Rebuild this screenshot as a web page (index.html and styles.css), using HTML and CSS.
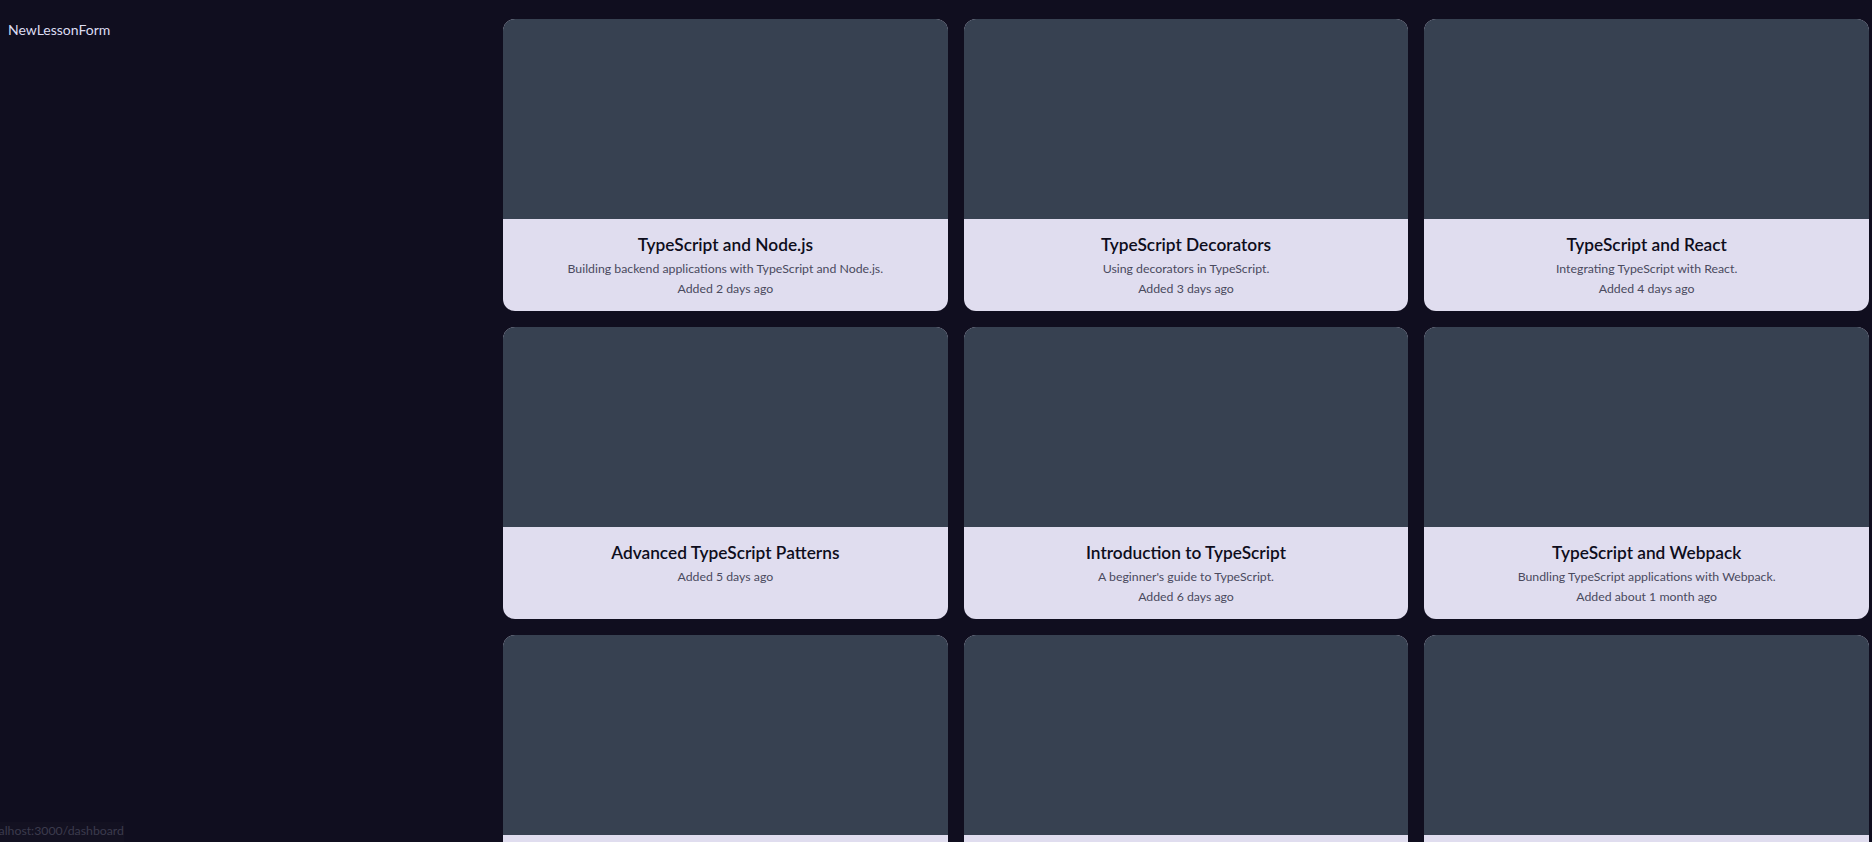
FILE: index.html
```html
<!DOCTYPE html>
<html lang="en">
<head>
<meta charset="utf-8">
<title>Dashboard</title>
<link rel="stylesheet" href="styles.css">
</head>
<body>
<div class="layout">
  <aside class="sidebar">
    <div class="sidebar-title">NewLessonForm</div>
  </aside>
  <main class="main">
    <div class="grid">
      <div class="card">
        <div class="thumb"></div>
        <div class="body">
          <div class="title">TypeScript and Node.js</div>
          <div class="desc">Building backend applications with TypeScript and Node.js.</div>
          <div class="date">Added 2 days ago</div>
        </div>
      </div>
      <div class="card">
        <div class="thumb"></div>
        <div class="body">
          <div class="title">TypeScript Decorators</div>
          <div class="desc">Using decorators in TypeScript.</div>
          <div class="date">Added 3 days ago</div>
        </div>
      </div>
      <div class="card">
        <div class="thumb"></div>
        <div class="body">
          <div class="title">TypeScript and React</div>
          <div class="desc">Integrating TypeScript with React.</div>
          <div class="date">Added 4 days ago</div>
        </div>
      </div>
      <div class="card">
        <div class="thumb"></div>
        <div class="body">
          <div class="title">Advanced TypeScript Patterns</div>
          <div class="date">Added 5 days ago</div>
        </div>
      </div>
      <div class="card">
        <div class="thumb"></div>
        <div class="body">
          <div class="title">Introduction to TypeScript</div>
          <div class="desc">A beginner's guide to TypeScript.</div>
          <div class="date">Added 6 days ago</div>
        </div>
      </div>
      <div class="card">
        <div class="thumb"></div>
        <div class="body">
          <div class="title">TypeScript and Webpack</div>
          <div class="desc">Bundling TypeScript applications with Webpack.</div>
          <div class="date">Added about 1 month ago</div>
        </div>
      </div>
      <div class="card">
        <div class="thumb"></div>
        <div class="body">
          <div class="title">TypeScript Generics</div>
          <div class="desc">Understanding generics in TypeScript.</div>
          <div class="date">Added about 1 month ago</div>
        </div>
      </div>
      <div class="card">
        <div class="thumb"></div>
        <div class="body">
          <div class="title">TypeScript with Express</div>
          <div class="desc">Building APIs with TypeScript and Express.</div>
          <div class="date">Added about 1 month ago</div>
        </div>
      </div>
      <div class="card">
        <div class="thumb"></div>
        <div class="body">
          <div class="title">TypeScript Utility Types</div>
          <div class="desc">Exploring built-in utility types.</div>
          <div class="date">Added about 2 months ago</div>
        </div>
      </div>
    </div>
  </main>
</div>
<div class="status">localhost:3000/dashboard</div>
</body>
</html>
```

FILE: styles.css
```css
html, body {
  margin: 0;
  padding: 0;
  background: #100e1f;
  height: 100%;
  overflow: hidden;
}
body {
  font-family: Lato, "Noto Sans", sans-serif;
  color: #e0ddef;
}
.layout {
  display: flex;
  align-items: flex-start;
}
.sidebar {
  width: 487px;
  flex-shrink: 0;
  padding: 18px 8px;
  box-sizing: border-box;
}
.sidebar-title {
  font-size: 14px;
  line-height: 24px;
  color: #dcdcf2;
}
.main {
  flex: 1;
  padding: 19px 3px 0 16px;
}
.grid {
  display: grid;
  grid-template-columns: repeat(3, 1fr);
  gap: 16px;
}
.card {
  border-radius: 12px;
  overflow: hidden;
  background: #e0ddef;
  display: flex;
  flex-direction: column;
}
.thumb {
  height: 200px;
  background: #374151;
}
.body {
  padding: 12px;
  text-align: center;
  flex: 1;
}
.title {
  font-size: 17.3px;
  line-height: 28px;
  font-weight: 600;
  color: #0e0d1c;
}
.desc, .date {
  font-size: 12.3px;
  line-height: 20px;
  color: #4a4a5e;
}
.status {
  position: fixed;
  left: 0;
  bottom: 0;
  width: 124px;
  height: 20px;
  overflow: hidden;
  background: #131121;
  color: #3c3b4d;
  font-size: 12.3px;
  line-height: 18px;
  white-space: nowrap;
  direction: rtl;
  text-align: left;
}
```
